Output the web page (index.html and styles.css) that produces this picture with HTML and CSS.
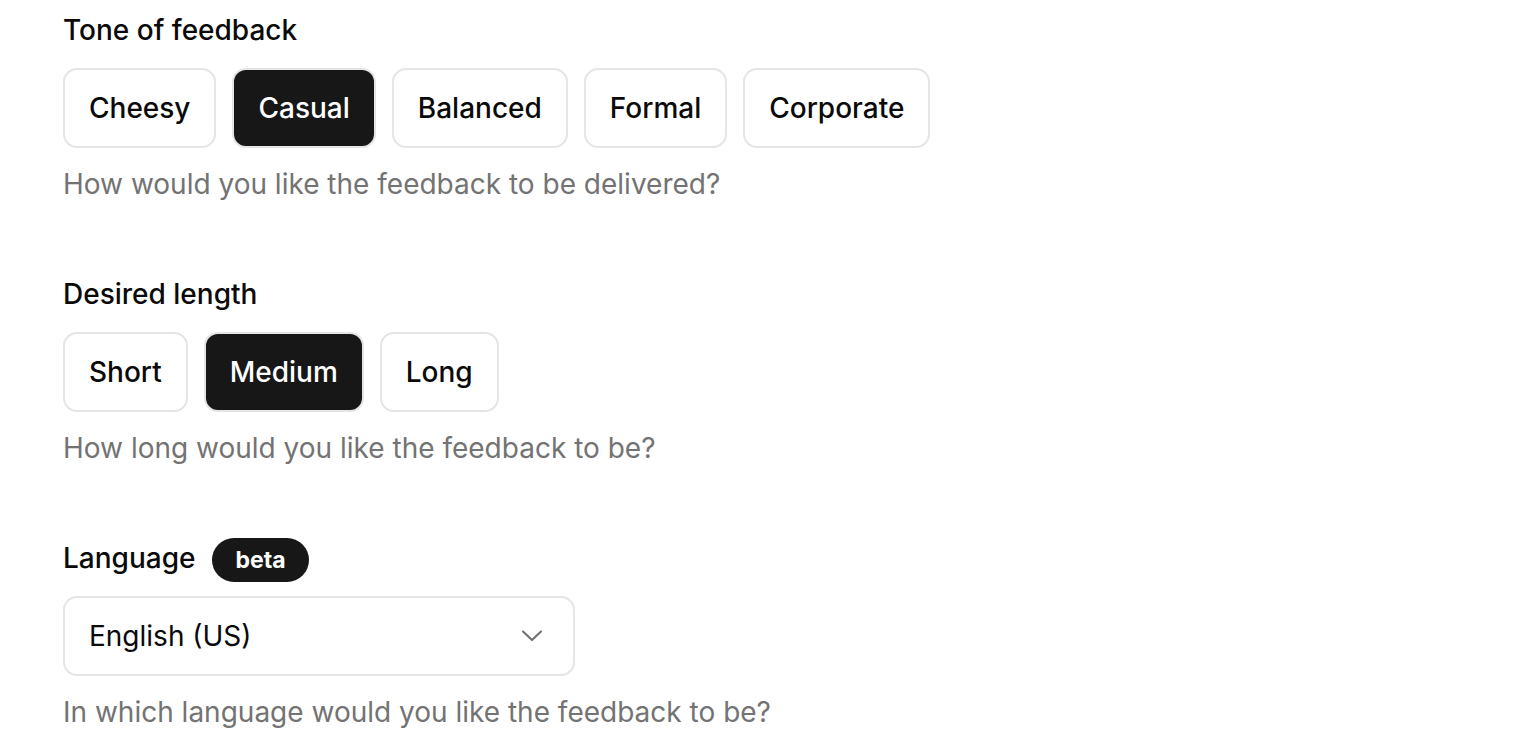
FILE: index.html
```html
<!DOCTYPE html>
<html lang="en">
<head>
<meta charset="utf-8">
<title>Feedback settings</title>
<link rel="stylesheet" href="styles.css">
</head>
<body>
<main class="form">
  <section class="field">
    <div class="label-row"><h2 class="label">Tone of feedback</h2></div>
    <div class="options">
      <button class="opt">Cheesy</button>
      <button class="opt active">Casual</button>
      <button class="opt">Balanced</button>
      <button class="opt">Formal</button>
      <button class="opt">Corporate</button>
    </div>
    <p class="help">How would you like the feedback to be delivered?</p>
  </section>
  <section class="field">
    <div class="label-row"><h2 class="label">Desired length</h2></div>
    <div class="options">
      <button class="opt">Short</button>
      <button class="opt active">Medium</button>
      <button class="opt">Long</button>
    </div>
    <p class="help">How long would you like the feedback to be?</p>
  </section>
  <section class="field">
    <div class="label-row"><h2 class="label">Language</h2><span class="badge">beta</span></div>
    <div class="select">
      <span class="select-value">English (US)</span>
      <svg class="chevron" width="22" height="14" viewBox="0 0 22 14" fill="none" stroke="#737373" stroke-width="2.2" stroke-linecap="round" stroke-linejoin="round"><path d="M2 2.5 L11 11 L20 2.5"/></svg>
    </div>
    <p class="help">In which language would you like the feedback to be?</p>
  </section>
</main>
</body>
</html>
```
FILE: styles.css
```css
* { box-sizing: border-box; }
html, body { margin: 0; background: #ffffff; }
body {
  font-family: Inter, "Noto Sans", sans-serif;
  color: #0a0a0a;
  padding: 8px 0 0 63px;
}
.form { display: flex; flex-direction: column; gap: 68px; }
.field { display: flex; flex-direction: column; }
.label-row { display: flex; align-items: center; gap: 17px; height: 44px; }
.label { margin: 0; font-size: 28px; font-weight: 500; line-height: 40px; }
.badge {
  display: inline-flex; align-items: center; justify-content: center;
  height: 44px; padding: 0 23px; border-radius: 22px;
  background: #171717; color: #fff; font-size: 23px; font-weight: 700;
  margin-top: 4px;
}
.options { display: flex; gap: 16px; margin-top: 16px; }
.opt {
  height: 80px; padding: 0 24px;
  border: 2px solid #e5e5e5; border-radius: 14px;
  background: #fff; color: #0a0a0a;
  font-family: inherit; font-size: 28px; font-weight: 500;
}
.opt.active { background: #171717; color: #fff; border-color: #e5e5e5; }
.help { margin: 16px 0 0; font-size: 28px; line-height: 40px; color: #737373; }
.select {
  margin-top: 16px; width: 512px; height: 80px;
  border: 2px solid #e5e5e5; border-radius: 14px;
  display: flex; align-items: center; justify-content: space-between;
  padding: 0 30px 0 24px;
  font-size: 28px;
}
```
